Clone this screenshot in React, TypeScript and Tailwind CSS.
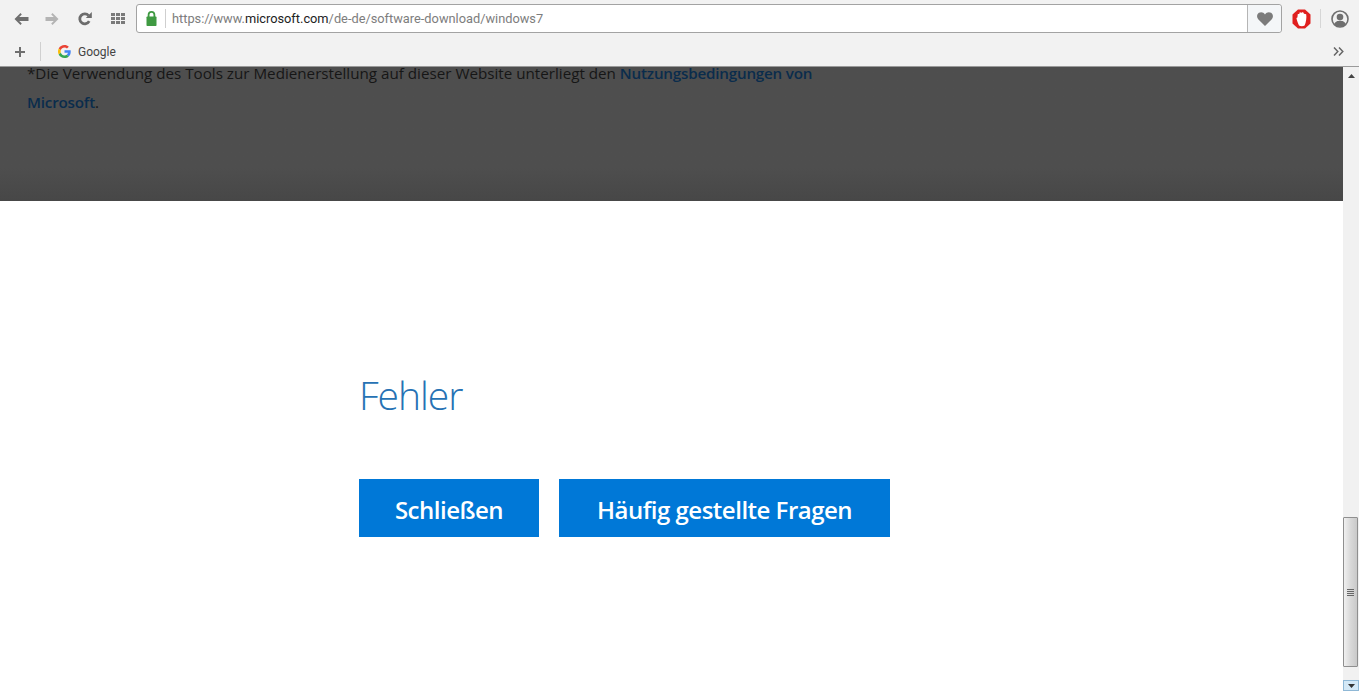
function BackArrow({ color }: { color: string }) {
  return (
    <svg width="15" height="12" viewBox="0 0 15 12">
      <path d="M6.500 0 L0.5 6 L6.500 12 L7.800 10.600 L5.200 8 H14.500 V4 H5.200 L7.800 1.400 Z" fill={color} />
    </svg>
  );
}

function ForwardArrow({ color }: { color: string }) {
  return (
    <svg width="14" height="12" viewBox="0 0 14 12">
      <path d="M7.500 0 L13.500 6 L7.500 12 L6.200 10.600 L8.800 8 H0.500 V4 H8.800 L6.200 1.400 Z" fill={color} />
    </svg>
  );
}

function Reload() {
  return (
    <svg width="14" height="14" viewBox="0 0 14 14">
      <path d="M11.200 9.200 A5 5 0 1 1 10.600 3.600" fill="none" stroke="#6c6c6c" strokeWidth="2.800" />
      <path d="M7.800 6 H13.800 V0 Z" fill="#6c6c6c" />
    </svg>
  );
}

function Apps() {
  const cells = [0, 5, 10];
  return (
    <svg width="14" height="11" viewBox="0 0 14 11">
      {cells.map((x) =>
        [0, 4, 8].map((y) => <rect key={`${x}-${y}`} x={x} y={y} width="4" height="3" fill="#7a7a7a" />),
      )}
    </svg>
  );
}

function Lock() {
  return (
    <svg width="11" height="15" viewBox="0 0 11 15">
      <path d="M2.600 6 V3.800 A2.900 2.900 0 0 1 8.400 3.800 V6" fill="none" stroke="#3f9a42" strokeWidth="1.800" />
      <rect x="0.500" y="5.500" width="10" height="9.500" rx="0.800" fill="#3f9a42" />
    </svg>
  );
}

function Heart() {
  return (
    <svg width="16" height="14" viewBox="0 0 16 14">
      <path d="M8 14 L1.200 7.200 C-0.600 5.200 -0.200 2 1.900 0.800 C4 -0.400 6.600 0.200 8 2.400 C9.400 0.200 12 -0.400 14.100 0.800 C16.200 2 16.600 5.200 14.800 7.200 Z" fill="#7b7b7b" />
    </svg>
  );
}

function OperaShield() {
  return (
    <svg width="19" height="20" viewBox="0 0 19 20">
      <path d="M6 0.500 H13 L18.500 5.500 V14.500 L13 19.500 H6 L0.500 14.500 V5.500 Z" fill="#e0201f" />
      <path d="M7 16.500 C6.200 14.500 5 12 4.400 9 L5.400 8.600 L5.800 5 L7.200 5 L7.800 3.200 L9.600 3.800 L11 3 L12 4.800 L14.200 5.200 C14.800 8.500 14 13.500 12.600 16.500 C11.200 17.400 8.400 17.400 7 16.500 Z" fill="#fff" />
    </svg>
  );
}

function Profile() {
  return (
    <svg width="18" height="18" viewBox="0 0 18 18">
      <circle cx="9" cy="9" r="8" fill="#f1f1f1" stroke="#6f6f6f" strokeWidth="1.600" />
      <circle cx="9" cy="7" r="3.300" fill="#6f6f6f" />
      <path d="M3.200 14.400 C4.200 11.400 6.600 10.800 9 10.800 C11.400 10.800 13.800 11.400 14.800 14.400 C13.200 16 11 16.600 9 16.600 C7 16.600 4.800 16 3.200 14.400 Z" fill="#6f6f6f" />
    </svg>
  );
}

function GoogleG() {
  return (
    <svg width="13" height="13" viewBox="0 0 48 48">
      <path fill="#EA4335" d="M24 9.500c3.500 0 6.700 1.300 9.100 3.500l6.800-6.800C35.800 2.400 30.300 0 24 0 14.600 0 6.500 5.400 2.600 13.200l7.900 6.200C12.400 13.600 17.700 9.500 24 9.500z" />
      <path fill="#4285F4" d="M47 24.500c0-1.600-.2-3.200-.4-4.700H24v9h12.900c-.6 3-2.200 5.500-4.700 7.200l7.700 6C44.400 37.800 47 31.700 47 24.500z" />
      <path fill="#FBBC05" d="M10.500 28.600c-.5-1.400-.8-3-.8-4.600s.3-3.200.8-4.600l-7.900-6.200C.9 16.500 0 20.100 0 24s.9 7.500 2.600 10.800l7.900-6.200z" />
      <path fill="#34A853" d="M24 48c6.500 0 11.900-2.100 15.900-5.900l-7.700-6c-2.200 1.400-4.900 2.300-8.200 2.300-6.300 0-11.600-4.100-13.500-9.800l-7.900 6.200C6.500 42.600 14.600 48 24 48z" />
    </svg>
  );
}

function Toolbar() {
  return (
    <div className="h-[67px] shrink-0 bg-[#f2f2f2] border-b border-[#9a9a9a] font-['Open_Sans',sans-serif]">
      <div className="flex h-[37px] items-center">
        <div className="flex w-[136px] shrink-0 items-center pl-[14px]">
          <BackArrow color="#6f6f6f" />
          <span className="ml-[16px]">
            <ForwardArrow color="#b4b4b4" />
          </span>
          <span className="ml-[19px]">
            <Reload />
          </span>
          <span className="ml-[19px]">
            <Apps />
          </span>
        </div>
        <div className="flex h-[29px] w-[1146px] shrink-0 items-center rounded-[3px] border border-[#a3a3a3] bg-white">
          <div className="flex h-full w-[28px] shrink-0 items-center justify-center">
            <Lock />
          </div>
          <div className="h-[19px] w-px bg-[#cfcfcf]" />
          <div className="ml-[6px] flex-1 font-['Roboto',sans-serif] text-[12.8px] text-[#7d7d7d]">
            https://www.<span className="text-[#222]">microsoft.com</span>/de-de/software-download/windows7
          </div>
          <div className="flex h-full w-[34px] shrink-0 items-center justify-center rounded-r-[3px] border-l border-[#b5b5b5] bg-[#f4f6f8]">
            <Heart />
          </div>
        </div>
        <div className="ml-[10px] shrink-0">
          <OperaShield />
        </div>
        <div className="ml-[9px] h-[19px] w-px bg-[#d6d6d6]" />
        <div className="ml-[10px] shrink-0">
          <Profile />
        </div>
      </div>
      <div className="flex h-[29px] items-center pr-[15px]">
        <svg className="ml-[15px]" width="10" height="10" viewBox="0 0 10 10">
          <path d="M4 0 H6 V4 H10 V6 H6 V10 H4 V6 H0 V4 H4 Z" fill="#6f6f6f" />
        </svg>
        <div className="ml-[15px] h-[19px] w-px bg-[#d0d0d0]" />
        <div className="ml-[17px]">
          <GoogleG />
        </div>
        <span className="ml-[7px] font-['Roboto',sans-serif] text-[12px] text-[#444]">Google</span>
        <svg className="ml-auto" width="11" height="9" viewBox="0 0 11 9">
          <path d="M1 0.500 L4.800 4.500 L1 8.500 M6 0.500 L9.800 4.500 L6 8.500" fill="none" stroke="#666" strokeWidth="1.500" />
        </svg>
      </div>
    </div>
  );
}

function Scrollbar() {
  return (
    <div className="flex w-[16px] shrink-0 flex-col bg-[#f1f1f1]">
      <div className="flex h-[17px] shrink-0 items-center justify-center">
        <svg width="7" height="4" viewBox="0 0 7 4">
          <path d="M3.500 0 L7 4 H0 Z" fill="#444" />
        </svg>
      </div>
      <div className="flex-1" />
      <div className="mr-px flex h-[150px] shrink-0 items-center justify-center rounded-[1px] border border-[#8f8f8f] bg-gradient-to-r from-[#f0f0f0] via-[#d9d9d9] to-[#c9c9c9]">
        <div className="flex flex-col gap-px">
          <div className="h-px w-[7px] bg-[#666]" />
          <div className="h-px w-[7px] bg-[#666]" />
          <div className="h-px w-[7px] bg-[#666]" />
          <div className="h-px w-[7px] bg-[#666]" />
        </div>
      </div>
      <div className="h-[13px] shrink-0" />
      <div className="flex h-[11px] shrink-0 items-center justify-center border border-[#8fb8d6] bg-[#d3e8f6]">
        <svg width="7" height="4" viewBox="0 0 7 4">
          <path d="M0 0 H7 L3.500 4 Z" fill="#333" />
        </svg>
      </div>
    </div>
  );
}

export default function App() {
  return (
    <div className="flex h-[691px] w-[1359px] flex-col bg-white">
      <Toolbar />
      <div className="flex min-h-0 flex-1">
        <main className="min-w-0 flex-1">
          <section className="flow-root h-[134px] bg-gradient-to-b from-[#4e4e4e] from-75% to-[#474747] pl-[27px] font-['Open_Sans',sans-serif] text-[15.2px] leading-[29px] text-[#161616]">
            <p className="-mt-[8px]">
              *Die Verwendung des Tools zur Medienerstellung auf dieser Website unterliegt den{" "}
              <a className="font-semibold tracking-[-0.2px] text-[#0a2c4c]">Nutzungsbedingungen von</a>
              <br />
              <a className="font-semibold tracking-[-0.2px] text-[#0a2c4c]">Microsoft</a>.
            </p>
          </section>
          <section className="pl-[359px] pt-[162px]">
            <h1 className="font-['Open_Sans',sans-serif] text-[39px] font-light leading-[64px] tracking-[-1px] text-[#2672b4]">Fehler</h1>
            <div className="mt-[52px] flex gap-[20px] font-['Open_Sans',sans-serif] text-[24px] font-semibold tracking-[-0.5px] text-white">
              <button className="h-[58px] w-[180px] bg-[#0078d7] pt-[3px]">Schließen</button>
              <button className="h-[58px] w-[331px] bg-[#0078d7] pt-[3px]">Häufig gestellte Fragen</button>
            </div>
          </section>
        </main>
        <Scrollbar />
      </div>
    </div>
  );
}
